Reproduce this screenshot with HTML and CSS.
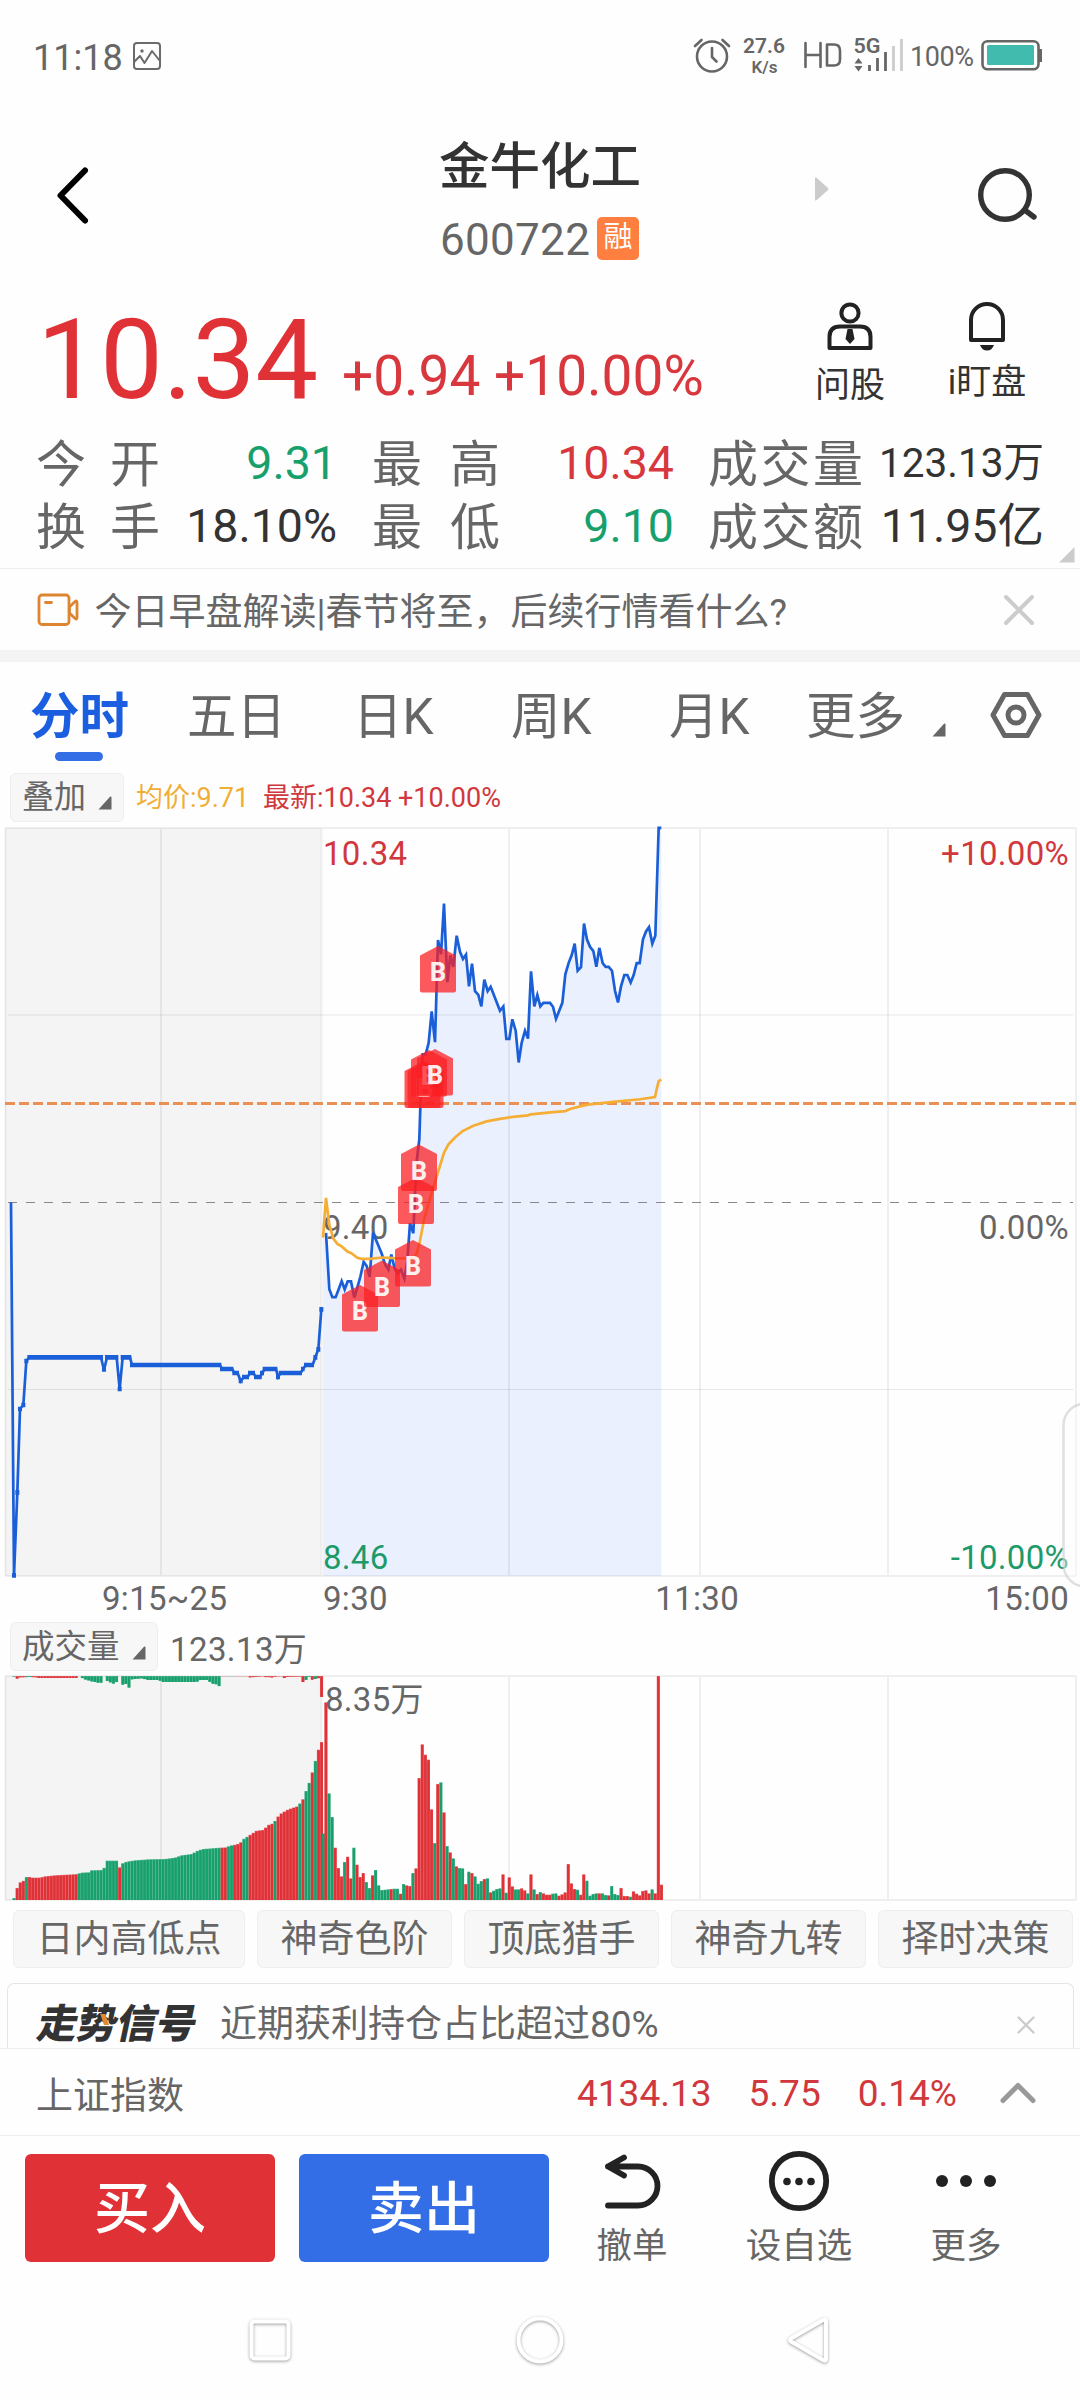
FILE: index.html
```html
<!DOCTYPE html>
<html lang="zh-CN">
<head>
<meta charset="utf-8">
<title>金牛化工 600722</title>
<link rel="stylesheet" href="styles.css">
</head>
<body>
<div class="screen">
  <div class="status">
    <span class="clock">11:18</span>
    <svg class="pic" width="30" height="30" viewBox="0 0 30 30"><rect x="2" y="2" width="26" height="26" rx="3"/><path d="M2.500 20.500L8 15l4.500 7L20 10l8 10"/><circle class="dot" cx="10" cy="10" r="1.700"/></svg>
    <svg class="sys" width="360" height="50" viewBox="690 32 360 50">
      <g class="ln"><circle cx="712" cy="56.500" r="15"/><path d="M712 48v9l4.500 4.500M695 46l6.500-6M729 46l-6.500-6"/></g>
      <text class="b" x="743" y="53" font-size="21" textLength="42">27.6</text>
      <text class="b" x="751.500" y="73" font-size="17" textLength="26">K/s</text>
      <path class="ln" d="M805.500 43v24M820.500 43v24M805.500 55h15M827 44.500h7q6 0 6 6v9q0 6-6 6h-7z"/>
      <text class="b" x="853.500" y="52.500" font-size="21" textLength="27" lengthAdjust="spacingAndGlyphs">5G</text>
      <path class="fl" d="M858.500 58l4 5.500h-8zM858.500 71.500l4-5.500h-8z"/>
      <path class="bar" d="M869.500 71v-6M877.500 71V58M885.500 71V52"/>
      <path class="bar off" d="M893.500 71V46M901.500 71V39"/>
      <text x="910" y="66" font-size="27" textLength="64">100%</text>
      <rect class="ln" x="982.500" y="41.300" width="56" height="28" rx="5"/><rect class="fl" x="1039" y="49" width="3" height="13"/>
      <rect class="cell" x="987" y="45" width="47" height="20" rx="1.500"/>
    </svg>
  </div>

  <header class="head">
    <svg class="back" width="40" height="60" viewBox="0 0 40 60"><path d="M33 4.500L8.500 29.500 33 54.500"/></svg>
    <div class="title">
      <h1>金牛化工</h1>
      <div class="code"><span>600722</span><b>融</b></div>
    </div>
    <svg class="next" width="14" height="24" viewBox="0 0 14 24"><path d="M0 1.500Q0-.500 1.800 1L13 11q1 1 0 2L1.800 23Q0 24.500 0 22.500z"/></svg>
    <svg class="search" width="64" height="60" viewBox="0 0 64 60"><circle cx="29" cy="30" r="24.300"/><path d="M50 46l8 6"/></svg>
  </header>

  <section class="quote">
    <span class="price">10.34</span>
    <span class="chg">+0.94 +10.00%</span>
    <div class="ask"><svg width="48" height="50" viewBox="0 0 48 50"><circle cx="24" cy="12" r="8.600"/><path d="M3.500 47V36q0-10.500 10.500-10.500h20q10.500 0 10.500 10.500v11z"/><path class="solid" d="M21.500 28h5l2 10-4.500 5-4.500-5z"/></svg><span>问股</span></div>
    <div class="watch"><svg width="48" height="50" viewBox="0 0 48 50"><path d="M8 39V19a16 16 0 0 1 32 0v20z"/><path class="solid" d="M17 44h14q-2 5.500-7 5.500T17 44z"/></svg><span>i盯盘</span></div>
  </section>

  <section class="stats">
    <span class="k">今开</span><span class="v dn">9.31</span><span class="k k2">最高</span><span class="v up">10.34</span><span class="k k3">成交量</span><span class="v sm">123.13万</span>
    <span class="k">换手</span><span class="v">18.10%</span><span class="k k2">最低</span><span class="v dn">9.10</span><span class="k k3">成交额</span><span class="v">11.95亿</span>
    <svg class="corner" width="16" height="16" viewBox="0 0 16 16"><path d="M15.500 0v15.500H0z"/></svg>
  </section>

  <section class="news">
    <svg width="42" height="34" viewBox="0 0 42 34"><rect x="2" y="2" width="30" height="29.500" rx="3"/><path d="M8.500 9.500h6M32.500 14l5.500-5.500q2-1.500 2 1v15q0 2.500-2 1L32.500 20z"/></svg>
    <span>今日早盘解读|春节将至，后续行情看什么?</span>
    <svg class="x" width="32" height="32" viewBox="0 0 32 32"><path d="M3 3l26 26M29 3L3 29"/></svg>
  </section>

  <nav class="tabs">
    <span class="on">分时</span><span>五日</span><span>日K</span><span>周K</span><span>月K</span><span>更多</span>
    <svg class="tri" width="14" height="14" viewBox="0 0 14 14"><path d="M13.500 1.500v12H.500L12 .800q1.500-1 1.500.700z"/></svg>
    <svg class="gear" width="52" height="48" viewBox="0 0 52 48"><path d="M14.500 3.500h23L49 24 37.500 44.500h-23L3 24z"/><circle cx="26" cy="24" r="8"/></svg>
  </nav>

  <div class="legend">
    <span class="pill">叠加<svg width="14" height="14" viewBox="0 0 14 14"><path d="M13.500 1.500v12H.500L12 .800q1.500-1 1.500.700z"/></svg></span>
    <span class="avg">均价:9.71</span><span class="last">最新:10.34 +10.00%</span>
  </div>

  <svg class="chart" width="1080" height="800" viewBox="0 822 1080 800">
    <rect class="pre" x="5" y="828" width="316" height="748"/>
    <path class="area" transform="translate(300 800) scale(.33333 .35714)" d="" id="area"/>
    <path class="grid" d="M5 828H1076M5 1576H1076M5.500 828V1576M161 828V1576M321.500 828V1576M509 828V1576M700 828V1576M888 828V1576M1076 828V1576"/>
    <path class="grid thin" d="M8 1015H1073M8 1389.500H1073"/>
    <path class="mid" d="M8 1202.500H1073"/>
    <g class="tx">
      <text class="up" x="323" y="865">10.34</text>
      <text x="323" y="1238.500">9.40</text>
      <text class="dn" x="323" y="1569">8.46</text>
      <text class="up end" x="1069" y="865">+10.00%</text>
      <text class="end" x="1069" y="1238.500">0.00%</text>
      <text class="dn end" x="1069" y="1569">-10.00%</text>
      <text x="102" y="1610">9:15~25</text>
      <text x="323" y="1610">9:30</text>
      <text class="end" x="739" y="1610">11:30</text>
      <text class="end" x="1069" y="1610">15:00</text>
    </g>
    <path class="cost" d="M5 1103.500H1076"/>
    <path class="px" transform="translate(0 1160) scale(.33333)" d="M33 127L42 1246 52 997 60 747 70 735 79 603 88 592H303L312 630 321 592H350L359 687 368 592H390L396 615H660L666 627H697L703 639H713L722 663 732 651H743L750 639H760L768 651H780L794 627H828L834 651 842 639H902L909 627 918 615H938L946 592 955 568 964 448"/>
    <path class="px thick" transform="translate(0 1160) scale(.33333)" d="M36 1246H48M46 997H58M54 747H66M64 735H76M73 603H85M82 592H309M306 628H318M315 592H355M353 687H365M362 592H394M390 615H664M660 627H700M697 639H717M716 663H728M726 651H747M744 639H765M762 651H785M780 639H792M788 627H832M828 651H840M836 639H906M903 627H914M912 615H942M940 592H952M949 568H961M958 448H970"/>
    <path class="px" transform="translate(300 800) scale(.33333 .35714)" id="price"/>
    <path class="px mean" transform="translate(300 800) scale(.33333 .35714)" d="M69 1225L78 1114 88 1190 100 1228 112 1243 125 1250 143 1265 153 1268 172 1282 185 1285H210L245 1281 280 1283 340 1284 350 1270 360 1235 372 1175 390 1115 405 1070 418 1030 432 988 445 965 465 945 488 927 520 912 560 900 600 893 640 887 684 883 693 880 760 874 796 871 810 865 840 858 870 852 940 845 1020 838 1065 832 1070 810 1076 787 1084 783"/>
    <g id="marks" class="marks"></g>
    <rect class="handle" x="1063.500" y="1403.500" width="60" height="183" rx="22"/>
  </svg>

  <div class="legend vol">
    <span class="pill">成交量<svg width="14" height="14" viewBox="0 0 14 14"><path d="M13.500 1.500v12H.500L12 .800q1.500-1 1.500.700z"/></svg></span>
    <span class="total">123.13万</span>
  </div>

  <svg class="chart" width="1080" height="232" viewBox="0 1672 1080 232">
    <rect class="pre" x="5" y="1676" width="316" height="224"/>
    <path class="grid" d="M5 1676H1076M5 1900H1076M5.500 1676V1900M161 1676V1900M321.500 1676V1900M509 1676V1900M700 1676V1900M888 1676V1900M1076 1676V1900"/>
    <g id="bars"></g>
    <g class="tx"><text x="325" y="1710.500">8.35万</text></g>
  </svg>

  <div class="tags"><span class="wide">日内高低点</span><span>神奇色阶</span><span>顶底猎手</span><span>神奇九转</span><span>择时决策</span></div>

  <div class="signal">
    <b>走势信号<svg width="12" height="12" viewBox="0 0 12 12"><path d="M0 0h5l6 11H6z"/></svg></b><span>近期获利持仓占比超过80%</span>
    <svg class="x" width="18" height="18" viewBox="0 0 18 18"><path d="M1.500 1.500l15 15M16.500 1.500l-15 15"/></svg>
  </div>

  <div class="index"><span class="name">上证指数</span><span>4134.13</span><span>5.75</span><span>0.14%</span>
    <svg width="38" height="24" viewBox="0 0 38 24"><path d="M4 19.500L19 4.500l15 15"/></svg></div>

  <div class="actions">
    <button class="buy">买入</button><button class="sell">卖出</button>
    <div class="act a1"><svg width="64" height="64" viewBox="0 0 64 64"><path d="M24 8.500L8 17.500l16 9M8 17.500h30a19.500 19.500 0 0 1 0 39H8"/></svg><span>撤单</span></div>
    <div class="act a2"><svg width="64" height="64" viewBox="0 0 64 64"><circle cx="32" cy="32" r="27.200"/><g class="solid"><circle cx="20" cy="32.500" r="3.800"/><circle cx="32" cy="32.500" r="3.800"/><circle cx="44" cy="32.500" r="3.800"/></g></svg><span>设自选</span></div>
    <div class="act a3"><svg width="64" height="64" viewBox="0 0 64 64"><g class="solid"><circle cx="8" cy="32" r="6"/><circle cx="32" cy="32" r="6"/><circle cx="56" cy="32" r="6"/></g></svg><span>更多</span></div>
  </div>

  <div class="sysnav">
    <svg width="56" height="56" viewBox="0 0 56 56"><rect x="9.500" y="9.500" width="37" height="37" rx="3"/></svg>
    <svg width="56" height="56" viewBox="0 0 56 56"><circle cx="28" cy="28" r="21.500"/></svg>
    <svg width="56" height="56" viewBox="0 0 56 56"><path d="M41 8q3-1.500 3 1.500v37q0 3-3 1.500L9 29.500q-2-1.500 0-3z"/></svg>
  </div>
</div>
<script src="chart.js"></script>
</body>
</html>
```
FILE: chart.js
```js
var NS = 'http://www.w3.org/2000/svg';
function add(parent, name, attrs, text) {
  var el = document.createElementNS(NS, name);
  for (var k in attrs) el.setAttribute(k, attrs[k]);
  if (text) el.textContent = text;
  parent.appendChild(el);
}

// Minute price line
var line = '78 1212 88 1370 97 1392 107 1392 116 1370 125 1347 134 1370 143 1348 153 1348 163 1393 172 1365 181 1335 191 1293 200 1305 209 1335 219 1212 245 1270 255 1300 265 1315 274 1273 284 1312 293 1325 303 1315 313 1340 322 1290 330 1185 340 1213 349 1020 358 950 362 830 368 712 377 712 386 680 395 592 405 678 414 392 423 432 432 290 442 510 451 435 460 467 470 380 480 425 489 445 498 433 507 522 516 458 525 535 535 546 544 578 553 503 563 535 572 523 600 590 610 578 619 669 628 669 637 614 647 646 656 735 665 680 675 646 684 668 693 480 703 578 712 546 721 578 730 568 750 568 759 579 768 613 787 568 796 488 806 456 815 435 824 402 833 478 843 468 852 346 861 391 870 411 880 423 889 467 898 414 908 457 917 467 926 467 936 478 945 534 954 567 963 522 973 490 982 490 992 511 1001 490 1010 457 1019 457 1029 390 1038 368 1047 356 1057 402 1066 380 1076 78 1084 78';
document.getElementById('price').setAttribute('d', 'M' + line);
document.getElementById('area').setAttribute('d', 'M69 2173L69 1225 ' + line + ' 1084 2173Z');

// Buy markers: left, top
var marks = document.getElementById('marks');
[[342, 1285], [364, 1260.5], [395, 1240], [398, 1177.5], [401, 1144.5], [404.5, 1061.5], [407.5, 1061.5], [411, 1050], [417, 1049], [420, 946]].forEach(function (m) {
  add(marks, 'path', { d: 'M' + (m[0] + 18) + ' ' + m[1] + 'l18 9.500v35q0 2-2 2h-32q-2 0-2-2v-35z' });
  add(marks, 'text', { x: m[0] + 18, y: m[1] + 35 }, 'B');
});

// Volume bars; values are in thirds of a pixel
var bars = document.getElementById('bars');
function bar(x, top, bottom, up) {
  var c = up ? '#e03137' : '#17a06c', X = x / 3, Y = 1620 + top / 3, H = (bottom - top) / 3;
  add(bars, 'rect', { x: X, y: Y, width: 3.1, height: H, fill: c, opacity: .7 });
  add(bars, 'rect', { x: X + .4, y: Y + .5, width: 2.5, height: Math.max(0, H - .5), fill: c });
}
function lerp(t, x) {
  for (var i = 1; i < t.length; i++) if (x < t[i][0]) {
    var a = t[i - 1], b = t[i];
    return a[1] + (b[1] - a[1]) * (x - a[0]) / (b[0] - a[0]);
  }
  return t[t.length - 1][1];
}
function inside(r, x) { return r.some(function (p) { return x >= p[0] && x < p[1]; }); }

var pre = [[37, 835], [46, 805], [56, 787], [65, 783], [74, 771], [84, 771], [94, 773], [115, 773], [131, 769], [160, 766], [232, 762], [234, 758], [262, 757], [270, 751], [300, 750], [307, 745], [316, 722], [352, 722], [354, 742], [360, 742], [363, 730], [375, 725], [400, 721], [440, 718], [490, 717], [520, 713], [540, 706], [570, 702], [590, 691], [605, 687], [655, 683], [678, 682], [682, 677], [698, 675], [715, 670], [726, 657], [745, 645], [765, 632], [785, 630], [800, 615], [812, 611], [820, 603], [829, 590], [840, 579], [860, 568], [890, 558], [895, 550], [904, 538], [913, 514], [922, 491], [931, 461], [941, 424], [950, 391], [959, 366]];
var preGreen = [[30, 42], [72, 80], [230, 352], [361, 657], [678, 695], [724, 742], [817, 826], [892, 901], [910, 928], [938, 946]];
var unm = [[37, 170], [46, 176], [56, 172], [84, 171], [105, 172], [112, 174], [230, 174], [233, 168], [240, 168], [243, 176], [270, 184], [289, 188], [300, 188], [306, 168], [312, 168], [317, 183], [335, 191], [345, 186], [352, 186], [354, 168], [360, 168], [363, 194], [373, 192], [382, 203], [391, 178], [420, 175], [440, 180], [470, 180], [485, 186], [585, 186], [595, 180], [620, 180], [628, 190], [645, 193], [655, 200], [660, 169], [740, 169], [745, 172], [790, 169], [795, 174], [805, 170], [813, 173], [822, 170], [840, 169], [848, 174], [856, 171], [895, 170], [904, 186], [913, 180], [922, 170], [931, 179], [941, 177], [950, 170], [959, 231]];
for (var i = 0; i < 100; i++) {
  var x = 37.3 + 9.32 * i;
  bar(x, lerp(pre, x), 840, !inside(preGreen, x));
  var t = lerp(unm, x);
  if (t > 168.5) bar(x, 168, t, !inside([[30, 42], [72, 84], [240, 660], [675, 690], [911, 926], [938, 946]], x));
}
bar(965, 640, 840, false);

var main = 'r247 g520 g591 r683 r744 r769 g726 r710 r775 g683 r734 r771 r759 g786 g804 r766 g750 g796 g810 g809 g808 r807 g806 g806 r821 g792 r796 r798 g759 r745 r474 r373 r404 r419 r568 g669 r492 g487 r577 g678 r697 g715 r739 g744 g745 r792 g755 r759 g769 g791 g783 r777 g775 r817 g812 g807 g805 r763 g818 r772 r799 g808 g808 r805 r811 g820 r763 g808 r822 g816 r820 r824 r824 g821 g820 r827 r823 r817 r732 r790 r807 g809 r824 r763 g782 g827 g822 g820 r820 g820 g825 r826 g798 g822 g825 r804 r828 r828 g830 r814 r821 r826 r813 r811 r820 g808 r820 r168 r794'.split(' ');
main.forEach(function (v, n) { bar(930 + 43 + 9.32 * n, +v.slice(1), 840, v[0] === 'r'); });
```
FILE: styles.css
```css
* { box-sizing: border-box; }
body { margin: 0; background: #fefefe; color: #666; font-family: Roboto, "Noto Sans CJK SC", sans-serif; }
.screen { width: 1080px; height: 2400px; display: flex; flex-direction: column; overflow: hidden; }
.screen > * { flex: none; }
svg { display: block; overflow: visible; fill: none; stroke-linecap: round; stroke-linejoin: round; }
span { white-space: nowrap; }
.up { color: #d7373d; }
.dn { color: #17a06c; }

.status { height: 116px; display: flex; align-items: center; padding: 0 30px 0 33px; }
.clock { font-size: 36px; line-height: 40px; }
.pic { margin: -4px 0 0 9px; stroke: #6b6b6b; stroke-width: 2; }
.pic .dot { fill: #6b6b6b; stroke: none; }
.sys { margin-left: auto; margin-top: -2px; }
.sys text { fill: #666; }
.sys .b { font-weight: 600; }
.sys .ln { stroke: #666; stroke-width: 2.6; }
.sys .fl { fill: #666; }
.sys .bar { stroke: #666; stroke-width: 2.8; stroke-linecap: butt; }
.sys .off { stroke: #ccc; }
.sys .cell { fill: #41bbad; }

.head { height: 164px; display: grid; grid-template-columns: 439px 201px 175px 161px 104px; align-items: start; }
.back, .title, .search { grid-row: 1; }
.back { grid-column: 1; margin: 50px 0 0 52px; stroke: #000; stroke-width: 6; }
.title { grid-column: 2; margin-top: 17px; }
h1 { margin: 0; font-size: 50.5px; line-height: 68px; font-weight: 500; color: #333; white-space: nowrap; }
.code { display: flex; align-items: center; height: 44px; margin-top: 15px; font-size: 44px; }
.code span { width: 158px; padding-left: 1px; line-height: 44px; margin-top: 3px; letter-spacing: .3px; }
.code b { width: 42px; height: 43px; line-height: 41px; border-radius: 5px; background: #ff7f41; color: #fff; font-size: 29px; font-weight: 400; text-align: center; }
.next { grid-column: 4; grid-row: 1; margin-top: 61px; fill: #ccc; }
.search { grid-column: 5; margin-top: 49px; stroke: #333; stroke-width: 5.4; }

.quote { height: 154px; display: flex; align-items: flex-start; padding-left: 37px; color: #e03137; }
.price { width: 305px; font-size: 112px; line-height: 120px; margin-top: 20px; }
.chg { width: 466px; font-size: 55px; line-height: 60px; margin-top: 66px; color: #d7373d; }
.ask, .watch { display: flex; flex-direction: column; align-items: center; color: #333; font-size: 35px; line-height: 40px; padding-top: 21px; }
.ask { width: 84px; }
.watch { width: 92px; margin-left: 49px; }
.quote svg { stroke: #222; stroke-width: 4; }
.quote .solid, .actions .solid { fill: #222; stroke: none; }
.ask span { margin-top: 15px; }
.watch span { margin-top: 12px; }

.stats { position: relative; height: 134px; display: grid; grid-template-columns: 124px 177px 163px 174px 189px 181px; grid-auto-rows: 63px; padding: 0 36px; line-height: 63px; }
.stats .k { font-size: 50px; text-align-last: justify; }
.k2 { padding-left: 35px; }
.k3 { padding-left: 34px; }
.stats .v { font-size: 46.5px; text-align: right; line-height: 58px; color: #333; }
.stats .up { color: #d7373d; }
.stats .dn { color: #17a06c; }
.stats .sm { font-size: 40.5px; }
.corner { position: absolute; right: 5px; bottom: 5px; fill: #ccc; }

.news { height: 94px; border-top: 1px solid #eee; border-bottom: 12px solid #f4f4f4; display: flex; align-items: center; padding: 0 45px 0 37px; font-size: 37px; }
.news svg { stroke: #de8532; stroke-width: 2.8; }
.news span { margin: -2px 0 0 15.5px; }
.news .x { margin-left: auto; stroke: #ccc; stroke-width: 4; }

.tabs { height: 108px; display: grid; grid-template-columns: 157px 166px 158px 158px 137px 126px 58px 52px; padding-left: 30px; font-size: 49.5px; line-height: 110px; }
.tabs .on { color: #1b5fe0; font-weight: 700; position: relative; }
.tabs .on::after { content: ""; position: absolute; left: 25px; top: 90px; width: 48px; height: 9px; border-radius: 5px; background: #336ee6; }
.tri { margin-top: 61px; fill: #666; }
.gear { margin-top: 29px; stroke: #666; stroke-width: 5; }

.legend { height: 52px; display: flex; align-items: center; padding-left: 10px; font-size: 27px; }
.pill { width: 114px; height: 49px; display: flex; align-items: center; justify-content: space-between; margin-top: 2px; padding: 0 11px 0 11px; font-size: 32px; line-height: 48px; background: #f7f7f7; border: 1px solid #eee; border-radius: 6px; }
.pill svg { fill: #666; margin-top: 12px; }
.avg { width: 127px; margin: -2px 0 0 12px; color: #f0ae37; }
.last { margin-top: -2px; color: #d0383d; }
.vol { height: 50px; }
.vol .pill { width: 148px; margin-top: -1px; font-size: 32.5px; }
.total { margin: -1px 0 0 12px; font-size: 33px; letter-spacing: .4px; }

.chart .pre { fill: #f4f4f4; }
.chart .area { fill: #eaf0fe; }
.grid { stroke: #000; stroke-opacity: .06; stroke-width: 2; stroke-linecap: butt; }
.grid.thin { stroke-width: 1; stroke-opacity: .09; }
.mid { stroke: #888; stroke-width: 1; stroke-dasharray: 9 9; stroke-linecap: butt; }
.cost { stroke: #ea8f55; stroke-width: 3; stroke-dasharray: 10 4; stroke-linecap: butt; }
.px { stroke: #1b5fd8; stroke-width: 2.7; vector-effect: non-scaling-stroke; stroke-linejoin: miter; stroke-linecap: butt; }
.px.thick { stroke-width: 4.6; }
.px.mean { stroke: #f5ae35; stroke-width: 2.7; }
.tx text { font-size: 33px; letter-spacing: .3px; fill: #666; }
.tx text.up { fill: #d0383d; }
.tx text.dn { fill: #1c9a69; }
.tx .end { text-anchor: end; }
.marks path { fill: #fb1f23; opacity: .74; }
.marks text { fill: #fff; fill-opacity: .92; font-size: 25px; font-weight: 800; text-anchor: middle; }
.handle { fill: #fff; fill-opacity: .4; stroke: #ccc; stroke-opacity: .6; stroke-width: 2.5; }

.tags { height: 79px; display: flex; gap: 12px; padding: 6px 7px 0 13px; }
.tags span { width: 195px; height: 58px; font-size: 37px; line-height: 57px; text-align: center; background: #f7f7f7; border: 1px solid #eee; border-radius: 6px; }
.tags .wide { width: 232px; }

.signal { height: 65px; margin: 0 6px 0 7px; border: 1px solid #e5e5e5; border-bottom: 0; border-radius: 7px 7px 0 0; display: flex; align-items: center; padding: 17px 38px 0 30px; font-size: 37px; line-height: 40px; }
.signal b { position: relative; width: 160px; font-size: 40px; font-weight: 900; color: #333; transform: skewX(-12deg); letter-spacing: -.3px; white-space: nowrap; }
.signal b svg { position: absolute; left: 60px; top: 9px; fill: #e08a35; }
.signal span { margin-left: 22px; }
.signal .x { margin-left: auto; stroke: #ccc; stroke-width: 2.4; }

.index { height: 88px; border-top: 1px solid #eee; border-bottom: 1px solid #eee; display: flex; align-items: center; padding: 2px 43px 0 36px; font-size: 37px; color: #d0383d; }
.index .name { width: 541px; color: #666; }
.index span + span { margin-right: 37px; }
.index svg { margin-left: auto; stroke: #999; stroke-width: 5; }

.actions { height: 150px; display: flex; padding: 18px 0 0 25px; }
button { width: 250px; height: 108px; margin: 0 24px 0 0; padding: 0; border: 0; border-radius: 6px; color: #fff; font: 500 56px/110px Roboto, "Noto Sans CJK SC", sans-serif; }
.buy { background: #e03137; }
.sell { background: #336ee6; }
.act { display: flex; flex-direction: column; align-items: center; width: 110px; margin-top: -5px; font-size: 35.5px; line-height: 40px; }
.act svg { stroke: #222; stroke-width: 5.8; }
.act span { margin-top: 13px; }
.a1 { margin-left: 4px; }
.a2 { margin-left: 57px; }
.a3 { margin-left: 57px; }

.sysnav { display: flex; justify-content: space-between; padding: 26px 242px 0 242px; }
.sysnav svg { stroke: #fff; stroke-width: 4; filter: drop-shadow(0 1px 1.5px rgba(0, 0, 0, .38)); }
```
